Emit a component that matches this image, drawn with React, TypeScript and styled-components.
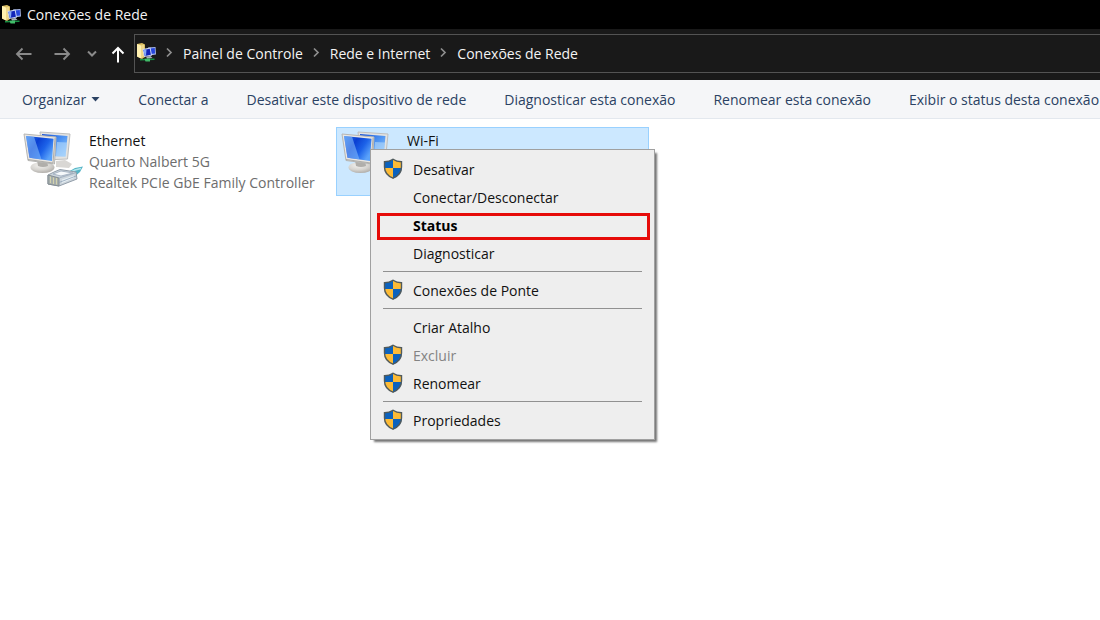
import React from "react";
import styled, { createGlobalStyle, css } from "styled-components";

const GlobalStyle = createGlobalStyle`
  * { box-sizing: border-box; }
  html, body { margin: 0; background: #fff; }
  body, button {
    font-family: "Open Sans", "Noto Sans", sans-serif;
    font-size: 14px;
    line-height: 21px;
  }
  button {
    margin: 0;
    padding: 0;
    border: 0;
    background: none;
    color: inherit;
    text-align: left;
    white-space: nowrap;
  }
  svg { display: block; flex: none; }
`;

const Window = styled.div`
  min-height: 100vh;
  display: flex;
  flex-direction: column;
  overflow: hidden;
`;

const TitleBar = styled.header`
  display: flex;
  align-items: center;
  gap: 6px;
  height: 29px;
  padding-left: 2px;
  background: #000;
  color: #f4f4f4;
`;

const Title = styled.h1`
  margin: 0;
  font-size: 14px;
  font-weight: 400;
`;

const NavBar = styled.nav`
  display: flex;
  align-items: center;
  height: 51px;
  padding: 0 0 3px 14px;
  background: #191919;
  color: #f4f4f4;
`;

const NavButtons = styled.div`
  display: grid;
  grid-template-columns: 39px 34px 24px 23px;
  align-items: center;
`;

const NavButton = styled.button<{ $active?: boolean }>`
  padding-top: 2px;
  color: ${(p) => (p.$active ? "#ffffff" : "#8a8a8a")};
`;

const AddressBar = styled.div`
  flex: 1;
  display: flex;
  align-items: center;
  gap: 9px;
  height: 39px;
  padding-left: 2px;
  border: 1px solid #535353;
  border-right: 0;
`;

const Crumb = styled.a`
  color: inherit;
  text-decoration: none;
  white-space: nowrap;
`;

const Toolbar = styled.div`
  display: flex;
  align-items: center;
  gap: 38px;
  height: 39px;
  padding-left: 22px;
  border-bottom: 1px solid #e3e8ee;
  background: #f5f6f8;
  color: #2b4263;
`;

const ToolButton = styled.button`
  display: flex;
  align-items: center;
  gap: 5px;
`;

const Content = styled.main`
  position: relative;
  flex: 1;
  display: flex;
  align-items: flex-start;
  gap: 5px;
  padding: 8px 18px;
`;

const Connection = styled.article<{ $selected?: boolean }>`
  display: flex;
  gap: 6px;
  width: 313px;
  height: 69px;
  padding: 2px 4px;
  border: 1px solid ${(p) => (p.$selected ? "#99d1ff" : "transparent")};
  background: ${(p) => (p.$selected ? "#cce8ff" : "transparent")};
  white-space: nowrap;
`;

const ConnectionName = styled.h2`
  margin: 0;
  font-size: 14px;
  font-weight: 400;
  color: #111;
`;

const ConnectionDetail = styled.p`
  margin: 0;
  color: #6d6d6d;
`;

const ContextMenu = styled.div`
  position: absolute;
  top: 30px;
  left: 370px;
  width: 285px;
  padding: 6px 4px 4px 6px;
  border: 1px solid #a0a0a0;
  background: #eeeeee;
  box-shadow: 3px 3px 2px -1px rgba(0, 0, 0, 0.55);
  color: #111;
`;

const MenuItem = styled.button<{ $highlighted?: boolean }>`
  display: flex;
  align-items: center;
  width: 100%;
  height: 27px;
  margin-top: 1px;
  padding: 0 0 3px 6px;

  &:disabled { color: #838383; }

  ${(p) =>
    p.$highlighted &&
    css`
      padding-left: 3px;
      border: 3px solid #e60b09;
      color: #000;
      font-weight: 700;
    `}
`;

const IconSlot = styled.span`
  width: 30px;
`;

const Separator = styled.hr`
  margin: 3px 8px 6px 6px;
  border: 0;
  border-top: 1px solid #919191;
`;

const FolderNetworkIcon = () => (
  <svg width="19" height="20" viewBox="0 0 19 20" aria-hidden="true">
    <path d="M0 1 5 0 8 1.500V14l-3 2-5-2.500z" fill="#dcbf62" />
    <path d="M0 1 4 2.500V15.500L0 13.500z" fill="#fff0b0" />
    <path d="M4 2.500 7 1.500V13L4 15.500z" fill="#efd88a" />
    <path d="M11 4.500 18.500 4 19 11.500 12 12.500z" fill="#a9b9ea" />
    <path d="M13 5.500 17.800 5 18 10.500 13.500 11z" fill="#2545dc" />
    <path d="M5.500 6 13.500 4.500 15 12.500 7 14z" fill="#c8d4f5" />
    <path d="M6.500 7 12.800 5.700 13.900 11.700 7.800 12.900z" fill="#1224b8" />
    <path d="M6.500 7 9.500 6.400 9 12.600 7.800 12.900z" fill="#86aaf8" />
    <path d="M9 13.500 13.500 13 15.500 15 10 15.800z" fill="#a8aebb" />
    <path d="M3 16 17.500 15.500 17.500 17 3 17.500z" fill="#168c42" />
    <path d="M7.500 15.800 13 15.500 13 18.500 8.500 18.500z" fill="#41bd69" />
  </svg>
);

const BackIcon = () => (
  <svg width="18" height="18" viewBox="0 0 18 18" fill="none" stroke="currentColor" strokeWidth="1.900" aria-hidden="true">
    <path d="M17.500 9H3M8.500 3.500 3 9 8.500 14.500" />
  </svg>
);

const ForwardIcon = () => (
  <svg width="18" height="18" viewBox="0 0 18 18" fill="none" stroke="currentColor" strokeWidth="1.900" aria-hidden="true">
    <path d="M1.500 9H16M10.500 3.500 16 9 10.500 14.500" />
  </svg>
);

const RecentIcon = () => (
  <svg width="10" height="10" viewBox="0 0 10 10" fill="none" stroke="currentColor" strokeWidth="2" aria-hidden="true">
    <path d="M1 2.500 5 6.500 9 2.500" />
  </svg>
);

const UpIcon = () => (
  <svg width="14" height="18" viewBox="0 0 14 18" fill="none" stroke="currentColor" strokeWidth="2" aria-hidden="true">
    <path d="M7 17.500V3M1.500 8.500 7 3 12.500 8.500" />
  </svg>
);

const ChevronIcon = () => (
  <svg width="9" height="12" viewBox="0 0 9 12" fill="none" stroke="#8f8f8f" strokeWidth="1.700" aria-hidden="true">
    <path d="M2 1.500 6 5.500 2 9.500" />
  </svg>
);

const CaretIcon = () => (
  <svg width="9" height="5" viewBox="0 0 9 5" aria-hidden="true">
    <path d="M0.500 0h8L4.500 4.500z" fill="#2b4263" />
  </svg>
);

const ShieldIcon = () => (
  <svg width="20" height="22" viewBox="0 0 20 22" aria-hidden="true">
    <path d="M10 1C7.500 2.800 4.500 3.500 1.300 3.500V10H10z" fill="#0c62bd" />
    <path d="M10 1c2.500 1.800 5.500 2.500 8.700 2.500V10H10z" fill="#fdbb35" />
    <path d="M1.300 10c.3 5 4 8.500 8.700 10.500V10z" fill="#fdbb35" />
    <path d="M18.700 10c-.3 5-4 8.500-8.700 10.500V10z" fill="#0c62bd" />
    <path
      d="M10 1.200C7.500 3 4.600 3.700 1.500 3.700V9c0 5.500 3.700 9.200 8.500 11.200 4.800-2 8.500-5.700 8.500-11.200V3.700c-3.100 0-6-.7-8.500-2.500z"
      fill="none"
      stroke="#505a5c"
      strokeWidth="1.400"
    />
  </svg>
);

const ComputersIcon = ({ id, plug }: { id: string; plug?: boolean }) => (
  <svg width="60" height="60" viewBox="0 0 60 60" aria-hidden="true">
    <defs>
      <linearGradient id={`${id}-front`} x1="0" y1="0" x2="1" y2="0.600">
        <stop offset="0" stopColor="#2f7bf0" />
        <stop offset="0.400" stopColor="#0a3fd2" />
        <stop offset="0.700" stopColor="#1c62e8" />
        <stop offset="1" stopColor="#5aa2fa" />
      </linearGradient>
      <linearGradient id={`${id}-back`} x1="0" y1="0" x2="1" y2="1">
        <stop offset="0" stopColor="#1650d8" />
        <stop offset="0.500" stopColor="#4f95f3" />
        <stop offset="1" stopColor="#9ed0fc" />
      </linearGradient>
      <radialGradient id={`${id}-stand`} cx="0.400" cy="0.300" r="0.700">
        <stop offset="0" stopColor="#f3f2ef" />
        <stop offset="0.600" stopColor="#d6d4d0" />
        <stop offset="1" stopColor="#b3b0ac" />
      </radialGradient>
    </defs>
    <path d="M33 31 42 30 49 34 46 38 33 37z" fill="#d9d7d4" />
    <path d="M17 2 47 4 44.500 29 20 30z" fill="#e3e3e1" stroke="#bdbebe" />
    <path d="M19 4 44.500 6 42.500 26.500 21 26z" fill={`url(#${id}-back)`} />
    <path d="M34 12 44 12.500 42.500 26.500 33 26z" fill="#b4dafc" opacity="0.600" />
    <ellipse cx="19.500" cy="37.500" rx="12" ry="5.500" fill={`url(#${id}-stand)`} />
    <path d="M14 30h10l1 6q-5 2-10 0z" fill="#b0aeaa" />
    <path d="M1 4 33 7 31.500 34 5 30.500z" fill="#e9e7e4" stroke="#b6b6b4" />
    <path d="M3 6 30.500 8.800 29 31 6.500 27.800z" fill={`url(#${id}-front)`} />
    <path d="M3 6 11 6.800 18.500 29.500 6.500 27.800z" fill="#8cc2fc" opacity="0.550" />
    <path d="M5 29.500 30 33 32 8" fill="none" stroke="#a19f9b" strokeWidth="0.800" />
    {plug && (
      <g>
        <path d="M45 42 52 38 60 36.500 57 42 50 48z" fill="#56b4c6" />
        <path d="M46 43 52 40 58 38.500" stroke="#b4e8ee" strokeWidth="1.600" fill="none" />
        <path d="M25 45 31 42 37 39.500 53 42 54 49 36 56 25 54z" fill="#ccd5dc" stroke="#929da9" />
        <path d="M25 45 36 48V56L25 54z" fill="#a5adab" stroke="#848d93" />
        <path d="M27.500 46.500v6.500M30.500 47.500v6.500M33.500 48v6.500" stroke="#d3d2ae" />
        <path d="M36 48 52 43M30 44 38 41 50 43 38 46z" fill="#f6f9fb" stroke="#9aa9bb" strokeWidth="0.800" />
        <path d="M39 49.500 51 45.500V48L39 53z" fill="#e8f0f5" />
        <path d="M36 52.500 53 46" stroke="#8fa3b8" strokeWidth="0.800" />
      </g>
    )}
  </svg>
);

const crumbs = ["Painel de Controle", "Rede e Internet", "Conexões de Rede"];

const commands = [
  "Conectar a",
  "Desativar este dispositivo de rede",
  "Diagnosticar esta conexão",
  "Renomear esta conexão",
  "Exibir o status desta conexão",
];

type Entry = { label: string; shield?: boolean; highlighted?: boolean; disabled?: boolean };

const menuGroups: Entry[][] = [
  [
    { label: "Desativar", shield: true },
    { label: "Conectar/Desconectar" },
    { label: "Status", highlighted: true },
    { label: "Diagnosticar" },
  ],
  [{ label: "Conexões de Ponte", shield: true }],
  [
    { label: "Criar Atalho" },
    { label: "Excluir", shield: true, disabled: true },
    { label: "Renomear", shield: true },
  ],
  [{ label: "Propriedades", shield: true }],
];

export default function App() {
  return (
    <>
      <GlobalStyle />
      <Window>
        <TitleBar>
          <FolderNetworkIcon />
          <Title>Conexões de Rede</Title>
        </TitleBar>
        <NavBar>
          <NavButtons>
            <NavButton aria-label="Voltar"><BackIcon /></NavButton>
            <NavButton aria-label="Avançar"><ForwardIcon /></NavButton>
            <NavButton aria-label="Locais recentes"><RecentIcon /></NavButton>
            <NavButton aria-label="Acima" $active><UpIcon /></NavButton>
          </NavButtons>
          <AddressBar>
            <FolderNetworkIcon />
            {crumbs.map((crumb) => (
              <React.Fragment key={crumb}>
                <ChevronIcon />
                <Crumb href="#">{crumb}</Crumb>
              </React.Fragment>
            ))}
          </AddressBar>
        </NavBar>
        <Toolbar>
          <ToolButton>Organizar <CaretIcon /></ToolButton>
          {commands.map((command) => (
            <ToolButton key={command}>{command}</ToolButton>
          ))}
        </Toolbar>
        <Content>
          <Connection>
            <ComputersIcon id="ethernet" plug />
            <div>
              <ConnectionName>Ethernet</ConnectionName>
              <ConnectionDetail>Quarto Nalbert 5G</ConnectionDetail>
              <ConnectionDetail>Realtek PCIe GbE Family Controller</ConnectionDetail>
            </div>
          </Connection>
          <Connection $selected>
            <ComputersIcon id="wifi" />
            <div>
              <ConnectionName>Wi-Fi</ConnectionName>
            </div>
          </Connection>
          <ContextMenu role="menu">
            {menuGroups.map((group, index) => (
              <React.Fragment key={index}>
                {index > 0 && <Separator />}
                {group.map((entry) => (
                  <MenuItem
                    key={entry.label}
                    role="menuitem"
                    disabled={entry.disabled}
                    $highlighted={entry.highlighted}
                  >
                    <IconSlot>{entry.shield && <ShieldIcon />}</IconSlot>
                    {entry.label}
                  </MenuItem>
                ))}
              </React.Fragment>
            ))}
          </ContextMenu>
        </Content>
      </Window>
    </>
  );
}
